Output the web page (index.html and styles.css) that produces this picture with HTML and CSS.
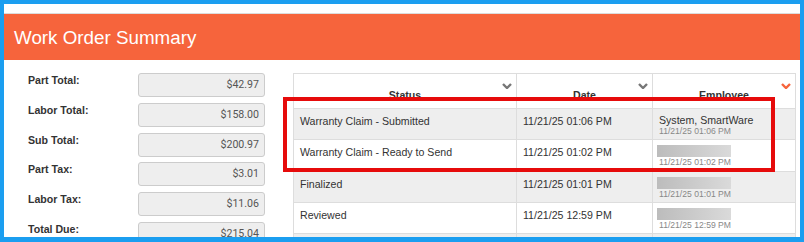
FILE: index.html
```html
<!DOCTYPE html>
<html lang="en">
<head>
  <meta charset="UTF-8" />
  <title>Work Order Summary</title>
  <link rel="stylesheet" href="styles.css">
</head>
<body>
  <div class="frame">
    <div class="top-strip"></div>
    <header class="panel-head">
      <h1>Work Order Summary</h1>
    </header>

    <div class="panel-body">
      <div class="totals">
        <div class="total-row"><label>Part Total:</label><div class="total-box">$42.97</div></div>
        <div class="total-row"><label>Labor Total:</label><div class="total-box">$158.00</div></div>
        <div class="total-row"><label>Sub Total:</label><div class="total-box">$200.97</div></div>
        <div class="total-row"><label>Part Tax:</label><div class="total-box">$3.01</div></div>
        <div class="total-row"><label>Labor Tax:</label><div class="total-box">$11.06</div></div>
        <div class="total-row"><label>Total Due:</label><div class="total-box">$215.04</div></div>
      </div>

      <div class="history">
        <table>
          <thead>
            <tr>
              <th class="col-status">Status
                <svg class="sort" viewBox="0 0 10 6"><polyline points="1,1 5,5 9,1" /></svg>
              </th>
              <th class="col-date">Date
                <svg class="sort" viewBox="0 0 10 6"><polyline points="1,1 5,5 9,1" /></svg>
              </th>
              <th class="col-emp">Employee
                <svg class="sort active" viewBox="0 0 10 6"><polyline points="1,1 5,5 9,1" /></svg>
              </th>
            </tr>
          </thead>
          <tbody>
            <tr class="odd">
              <td>Warranty Claim - Submitted</td>
              <td>11/21/25 01:06 PM</td>
              <td><div class="emp-name">System, SmartWare</div><div class="emp-date">11/21/25 01:06 PM</div></td>
            </tr>
            <tr>
              <td>Warranty Claim - Ready to Send</td>
              <td>11/21/25 01:02 PM</td>
              <td><div class="emp-hidden"></div><div class="emp-date">11/21/25 01:02 PM</div></td>
            </tr>
            <tr class="odd">
              <td>Finalized</td>
              <td>11/21/25 01:01 PM</td>
              <td><div class="emp-hidden"></div><div class="emp-date">11/21/25 01:01 PM</div></td>
            </tr>
            <tr>
              <td>Reviewed</td>
              <td>11/21/25 12:59 PM</td>
              <td><div class="emp-hidden"></div><div class="emp-date">11/21/25 12:59 PM</div></td>
            </tr>
            <tr class="odd">
              <td></td>
              <td></td>
              <td></td>
            </tr>
          </tbody>
        </table>
      </div>

      <div class="callout"></div>
    </div>
  </div>
</body>
</html>
```

FILE: styles.css
```css
* {
  box-sizing: border-box;
  margin: 0;
  padding: 0;
}
body {
  font-family: 'Liberation Sans', Arial, sans-serif;
  font-size: 10.6px;
  color: #333;
  background: #fff;
}
.frame {
  width: 804px;
  height: 242px;
  border-style: solid;
  border-color: #1b9ef0;
  border-width: 4px 4px 5px 4px;
  overflow: hidden;
  background: #fff;
}
.top-strip {
  height: 10px;
  border-bottom: 1px solid #dcdcdc;
}
.panel-head {
  height: 46px;
  background-color: #f6643c;
  display: flex;
  align-items: center;
  padding-left: 10px;
}
.panel-head h1 {
  font-weight: 400;
  font-size: 18.8px;
  color: #fff;
  padding-top: 1px;
}
.panel-body {
  position: relative;
  display: flex;
  padding: 13px 0 0 24px;
}
.totals {
  width: 237px;
  flex-shrink: 0;
}
.total-row {
  display: flex;
  align-items: flex-start;
  height: 29.8px;
}
.total-row label {
  width: 110px;
  font-weight: 700;
  line-height: 14px;
  color: #333;
}
.total-box {
  width: 127px;
  height: 24px;
  border: 1px solid #ccc;
  border-radius: 3px;
  background-color: #eee;
  font-family: Roboto, 'Liberation Sans', sans-serif;
  color: #555;
  text-align: right;
  padding-right: 5px;
  line-height: 22px;
}
.history {
  margin-left: 28px;
  width: 502px;
  flex-shrink: 0;
}
table {
  width: 502px;
  border-collapse: collapse;
  table-layout: fixed;
  border: 1px solid #ddd;
}
th {
  position: relative;
  height: 35px;
  font-weight: 700;
  text-align: center;
  vertical-align: bottom;
  padding-bottom: 6px;
  line-height: 14px;
  border: 1px solid #ddd;
}
.col-status { width: 223px; }
.col-date { width: 136px; }
.col-emp { width: 143px; }
.sort {
  position: absolute;
  top: 9px;
  right: 4px;
  width: 10px;
  height: 6px;
  fill: none;
  stroke: #777;
  stroke-width: 2.4;
}
.sort.active {
  stroke: #f6643c;
}
td {
  height: 31.3px;
  padding: 6px 4px 0 6px;
  vertical-align: top;
  line-height: 13px;
  border: 1px solid #ddd;
  white-space: nowrap;
}
tr.odd td {
  background-color: #eee;
}
.emp-name {
  margin-top: -1px;
  line-height: 13px;
}
.emp-date {
  font-size: 8.6px;
  line-height: 9px;
  color: #888;
}
.emp-hidden {
  width: 74px;
  height: 12px;
  margin: -1px 0 1px -2px;
  background: linear-gradient(to right, #bcbcbc, #dadada);
  filter: blur(0.6px);
}
.callout {
  position: absolute;
  left: 279px;
  top: 37px;
  width: 492px;
  height: 75px;
  border: 4.5px solid #e60b0b;
}
```
